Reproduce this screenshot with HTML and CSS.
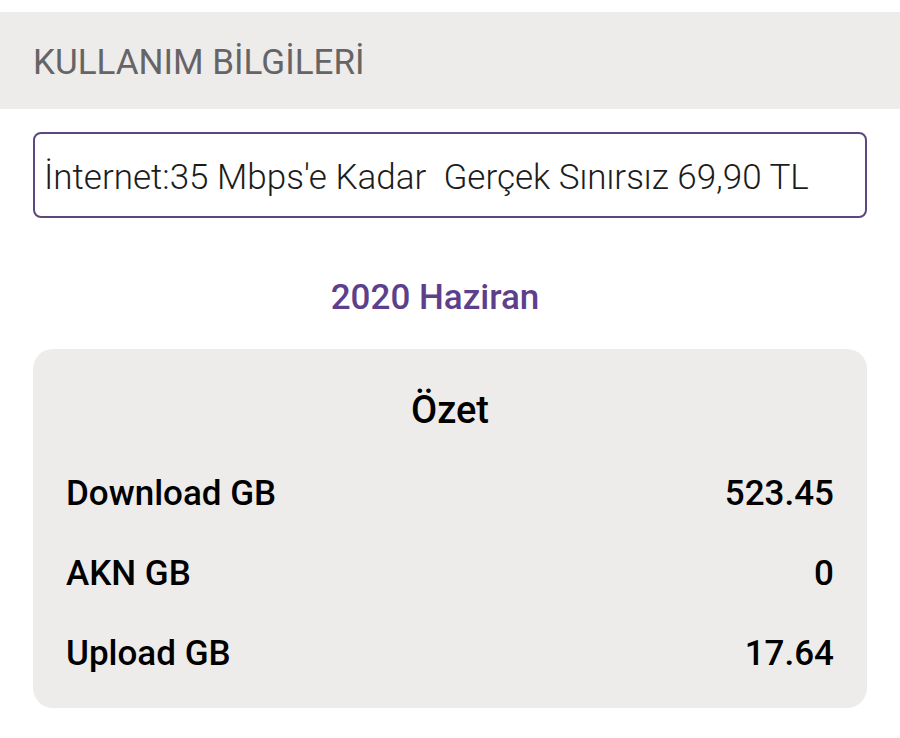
FILE: index.html
```html
<!DOCTYPE html>
<html>
  <head>
    <meta charset="utf-8" />
    <meta name="viewport" content="width=device-width, initial-scale=1" />
    <title>Kullanım Bilgileri</title>
    <link rel="stylesheet" href="styles.css">
  </head>
  <body>
    <div class="page">
      <div class="header">
        <h1>KULLANIM BİLGİLERİ</h1>
      </div>
      <div class="content">
        <div class="package">İnternet:35 Mbps'e Kadar&nbsp; Gerçek Sınırsız 69,90 TL</div>
        <h2 class="period">2020 Haziran</h2>
        <div class="summary">
          <h3>Özet</h3>
          <div class="summary-row">
            <span>Download GB</span>
            <span>523.45</span>
          </div>
          <div class="summary-row">
            <span>AKN GB</span>
            <span>0</span>
          </div>
          <div class="summary-row">
            <span>Upload GB</span>
            <span>17.64</span>
          </div>
        </div>
      </div>
    </div>
  </body>
</html>
```

FILE: styles.css
```css
body {
  margin: 0;
  background: #fff;
  font-family: Roboto, "Noto Sans", sans-serif;
}
.page {
  padding-top: 12px;
}
.header {
  background: #edeceb;
  height: 97px;
  box-sizing: border-box;
  display: flex;
  align-items: center;
  padding: 4px 0 0 33px;
}
.header h1 {
  margin: 0;
  font-size: 35px;
  font-weight: 400;
  color: #666565;
}
.content {
  padding: 23px 33px 0 33px;
}
.package {
  border: 2px solid #5d4781;
  border-radius: 8px;
  box-sizing: border-box;
  height: 86px;
  display: flex;
  align-items: center;
  padding: 5px 0 0 9px;
  font-size: 35px;
  font-weight: 300;
  color: #1c1c1c;
  white-space: pre;
}
.period {
  margin: 60px 0 0 0;
  text-align: center;
  font-size: 35px;
  font-weight: 500;
  color: #5e3f8b;
  line-height: 40px;
  padding-right: 30px;
}
.summary {
  margin-top: 31px;
  background: #edeceb;
  border-radius: 20px;
  padding: 40px 33px 15px 33px;
}
.summary h3 {
  margin: 0 0 22px 0;
  text-align: center;
  font-size: 38px;
  font-weight: 500;
  color: #000;
  line-height: 42px;
}
.summary-row {
  display: flex;
  justify-content: space-between;
  font-size: 35px;
  font-weight: 500;
  color: #000;
  height: 80px;
  align-items: center;
}
```
